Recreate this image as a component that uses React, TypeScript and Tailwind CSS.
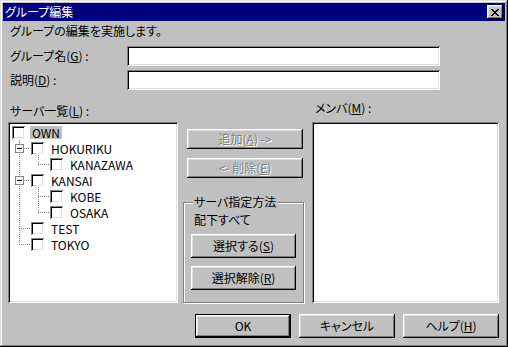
import React from 'react'

const raised =
  'bg-[#c0c0c0] shadow-[inset_-1px_-1px_#000,inset_1px_1px_#fff,inset_-2px_-2px_#808080,inset_2px_2px_#dfdfdf]'
const sunken =
  'bg-white shadow-[inset_1px_1px_#808080,inset_-1px_-1px_#fff,inset_2px_2px_#000,inset_-2px_-2px_#dfdfdf]'

type Node = { label: string; level: number; expander?: boolean; selected?: boolean }

const nodes: Node[] = [
  { label: 'OWN', level: 0, selected: true },
  { label: 'HOKURIKU', level: 1, expander: true },
  { label: 'KANAZAWA', level: 2 },
  { label: 'KANSAI', level: 1, expander: true },
  { label: 'KOBE', level: 2 },
  { label: 'OSAKA', level: 2 },
  { label: 'TEST', level: 1 },
  { label: 'TOKYO', level: 1 },
]

const indent = ['w-[2px]', 'w-[21px]', 'w-[40px]']

function Button({
  children,
  className = '',
  disabled = false,
}: {
  children: React.ReactNode
  className?: string
  disabled?: boolean
}) {
  return (
    <button
      className={`${raised} flex items-center justify-center ${
        disabled ? 'text-[#808080] [text-shadow:1px_1px_#fff]' : 'text-black'
      } ${className}`}
    >
      {children}
    </button>
  )
}

function CloseIcon() {
  return (
    <svg width="8" height="7" viewBox="0 0 8 7" shapeRendering="crispEdges">
      <path
        fill="#000"
        d="M0 0h2v1H0zM6 0h2v1H6zM1 1h2v1H1zM5 1h2v1H5zM2 2h4v1H2zM3 3h2v1H3zM2 4h4v1H2zM1 5h2v1H1zM5 5h2v1H5zM0 6h2v1H0zM6 6h2v1H6z"
      />
    </svg>
  )
}

function TreeLines() {
  const dot = { stroke: '#808080', strokeDasharray: '1 1', shapeRendering: 'crispEdges' as const }
  return (
    <svg className="absolute left-0 top-0 pointer-events-none" width="170" height="181">
      <line x1="11.5" y1="18" x2="11.5" y2="123" {...dot} />
      <line x1="16" y1="26.5" x2="22" y2="26.5" {...dot} />
      <line x1="16" y1="58.5" x2="22" y2="58.5" {...dot} />
      <line x1="11" y1="106.5" x2="22" y2="106.5" {...dot} />
      <line x1="11" y1="122.5" x2="22" y2="122.5" {...dot} />
      <line x1="30.5" y1="33" x2="30.5" y2="43" {...dot} />
      <line x1="30" y1="42.5" x2="42" y2="42.5" {...dot} />
      <line x1="30.5" y1="65" x2="30.5" y2="91" {...dot} />
      <line x1="30" y1="74.5" x2="42" y2="74.5" {...dot} />
      <line x1="30" y1="90.5" x2="42" y2="90.5" {...dot} />
    </svg>
  )
}

function TreeRow({ node }: { node: Node }) {
  return (
    <div className="relative flex items-start h-[16px]">
      <div className={`${indent[node.level]} shrink-0 h-full`}>
        {node.expander && (
          <div className="ml-[5px] mt-[2px] w-[9px] h-[9px] border border-[#808080] bg-white flex items-center justify-center">
            <div className="w-[5px] h-px bg-black" />
          </div>
        )}
      </div>
      <div className="w-[13px] h-[13px] shrink-0 bg-white shadow-[inset_1px_1px_#808080,inset_-1px_-1px_#fff,inset_2px_2px_#000,inset_-2px_-2px_#dfdfdf]" />
      <span
        className={`ml-[5px] px-[2px] h-[13px] leading-[13px] whitespace-nowrap ${
          node.selected ? 'bg-[#c0c0c0]' : ''
        }`}
      >
        {node.label}
      </span>
    </div>
  )
}

export default function App() {
  return (
    <div className="w-[508px] h-[347px] bg-[#c0c0c0] p-[3px] flex flex-col text-[12px] leading-[14px] text-black font-['Noto_Sans_CJK_JP',sans-serif] [font-feature-settings:'palt'] shadow-[inset_-1px_-1px_#000,inset_1px_1px_#dfdfdf,inset_-2px_-2px_#808080,inset_2px_2px_#fff]">
      <div className="h-[18px] bg-[#000080] flex items-center justify-between pl-[2px] pr-[2px]">
        <span className="text-white">グループ編集</span>
        <button className={`${raised} w-[16px] h-[14px] flex items-center justify-center`}>
          <CloseIcon />
        </button>
      </div>

      <div className="flex-1 flex flex-col pl-[5px] pr-[6px]">
        <p className="mt-[3px] ml-[2px] h-[14px]">グループの編集を実施します。</p>

        <div className="mt-[8px] flex items-center h-[20px]">
          <label className="w-[119px] pl-[2px]">
            グループ名(<u>G</u>) :
          </label>
          <div className={`${sunken} w-[313px] h-[20px]`} />
        </div>
        <div className="mt-[4px] flex items-center h-[20px]">
          <label className="w-[119px] pl-[2px]">
            説明(<u>D</u>) :
          </label>
          <div className={`${sunken} w-[313px] h-[20px]`} />
        </div>

        <div className="mt-[14px] h-[14px] flex items-start">
          <span className="w-[304px] pl-[2px]">
            サーバ一覧(<u>L</u>) :
          </span>
          <span className="pl-[3px] -mt-[3px]">
            メンバ(<u>M</u>) :
          </span>
        </div>

        <div className="mt-[4px] h-[181px] flex">
          <div className={`${sunken} relative w-[170px] h-full pt-[4px] pl-[2px] overflow-hidden`}>
            <TreeLines />
            {nodes.map((n) => (
              <TreeRow key={n.label} node={n} />
            ))}
          </div>

          <div className="ml-[5px] w-[121px] flex flex-col">
            <Button disabled className="mt-[7px] ml-[4px] w-[116px] h-[20px]">
              追加(<u>A</u>) -&gt;
            </Button>
            <Button disabled className="mt-[9px] ml-[4px] w-[116px] h-[20px]">
              &lt;- 削除(<u>E</u>)
            </Button>

            <div className="relative mt-[24px] flex-1 border border-[#808080] shadow-[inset_1px_1px_#fff,1px_1px_#fff] flex flex-col pt-[10px] pl-[7px]">
              <span className="absolute -top-[8px] left-[9px] px-[1px] bg-[#c0c0c0]">サーバ指定方法</span>
              <span className="ml-[3px] h-[14px]">配下すべて</span>
              <Button className="mt-[7px] w-[105px] h-[24px]">
                選択する(<u>S</u>)
              </Button>
              <Button className="mt-[8px] w-[105px] h-[24px]">
                選択解除(<u>R</u>)
              </Button>
            </div>
          </div>

          <div className={`${sunken} ml-[8px] w-[187px] h-full`} />
        </div>

        <div className="mt-[11px] flex justify-end gap-[8px]">
          <button className="w-[96px] h-[24px] bg-[#c0c0c0] flex items-center justify-center shadow-[inset_0_0_0_1px_#000,inset_-2px_-2px_#000,inset_2px_2px_#fff,inset_-3px_-3px_#808080,inset_3px_3px_#dfdfdf]">
            OK
          </button>
          <Button className="w-[96px] h-[24px]">キャンセル</Button>
          <Button className="w-[96px] h-[24px]">
            ヘルプ(<u>H</u>)
          </Button>
        </div>
      </div>
    </div>
  )
}
